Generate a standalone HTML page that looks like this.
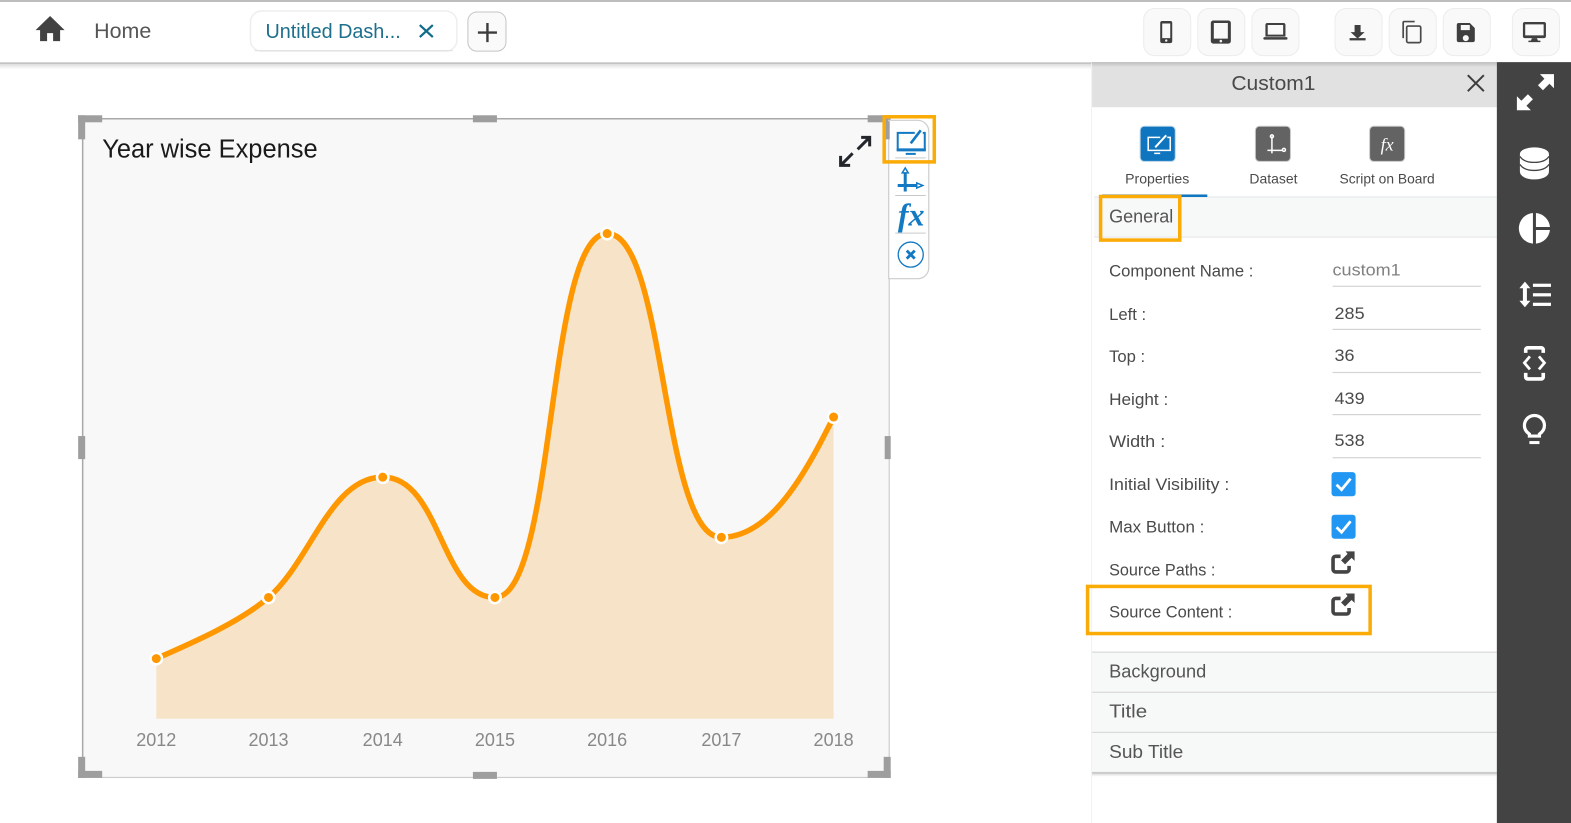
<!DOCTYPE html>
<html><head><meta charset="utf-8"><style>
html,body{margin:0;padding:0;background:#fff;width:1571px;height:823px;overflow:hidden}
svg{display:block;position:absolute;left:0;top:0}
text{font-family:"Liberation Sans",sans-serif}
</style></head><body>
<svg width="1571" height="823" viewBox="0 0 1568 821" preserveAspectRatio="none" xmlns="http://www.w3.org/2000/svg">
<defs>
<linearGradient id="sh" x1="0" y1="0" x2="0" y2="1"><stop offset="0" stop-color="#000" stop-opacity=".16"/><stop offset="1" stop-color="#000" stop-opacity="0"/></linearGradient>
</defs>
<!-- top bar -->
<rect x="0" y="0" width="1568" height="2" fill="#bdbdbd"/>
<rect x="0" y="62" width="1568" height="1.5" fill="#cfcfcf"/>
<rect x="0" y="63" width="1090" height="6" fill="url(#sh)"/>
<path d="M50 16 L64.5 30 L60 30 L60 41 L53 41 L53 33 L47 33 L47 41 L40 41 L40 30 L35.500 30 Z" fill="#424242"/>
<text x="94" y="38" font-size="21" textLength="57" lengthAdjust="spacingAndGlyphs" fill="#555">Home</text>
<rect x="250" y="11" width="206" height="40" rx="11" fill="#fff" stroke="#eeeeee" stroke-width="1.500"/>
<path d="M254 50.500 H452" fill="none" stroke="#e4e4e4" stroke-width="1.200"/>
<text x="265" y="38" font-size="20" textLength="135" lengthAdjust="spacingAndGlyphs" fill="#1d6f8c">Untitled Dash...</text>
<path d="M419 25 L432 37 M432 25 L419 37" stroke="#0f6b8a" stroke-width="2.200"/>
<rect x="467" y="12" width="38" height="39" rx="9" fill="#fafafa" stroke="#c4c4c4"/>
<path d="M477 32.500 H496 M486.500 23 V42" stroke="#3c3c3c" stroke-width="2.400"/>

<!-- device buttons -->
<g fill="#f9f9f9" stroke="#ececec">
<rect x="1141.500" y="8.500" width="47" height="47" rx="11"/>
<rect x="1195.500" y="8.500" width="47" height="47" rx="11"/>
<rect x="1249.500" y="8.500" width="47" height="47" rx="11"/>
<rect x="1332.500" y="8.500" width="47" height="47" rx="11"/>
<rect x="1386.500" y="8.500" width="47" height="47" rx="11"/>
<rect x="1440.500" y="8.500" width="47" height="47" rx="11"/>
<rect x="1509.500" y="8.500" width="47" height="47" rx="11"/>
</g>
<g fill="#3f3f3f">
<path fill-rule="evenodd" d="M1160 21h8a2 2 0 0 1 2 2v18a2 2 0 0 1-2 2h-8a2 2 0 0 1-2-2V23a2 2 0 0 1 2-2zm0 2.500V38h8V23.500z"/>
<path fill-rule="evenodd" d="M1211 20.500h15a2.500 2.500 0 0 1 2.500 2.500v18a2.500 2.500 0 0 1-2.500 2.500h-15a2.500 2.500 0 0 1-2.500-2.500V23a2.500 2.500 0 0 1 2.500-2.500zm.5 2.500v15.500h14V23z"/>
<path fill-rule="evenodd" d="M1265 23h16a2 2 0 0 1 2 2v11.500h-20V25a2 2 0 0 1 2-2zm.3 2v9.500h15.400V25z"/>
<rect x="1261" y="37" width="24" height="2.500" rx="1"/>
<path d="M1352 25h6v7h4l-7 6.500-7-6.500h4z"/>
<rect x="1347" y="38" width="16" height="2.300"/>
<path fill-rule="evenodd" d="M1456 23h11l5 5v12a2 2 0 0 1-2 2h-14a2 2 0 0 1-2-2V25a2 2 0 0 1 2-2zm2 2v5h9v-5zm5 10a3 3 0 1 0 .01 0z"/>
<path fill-rule="evenodd" d="M1522 22h19a2 2 0 0 1 2 2v12a2 2 0 0 1-2 2h-19a2 2 0 0 1-2-2V24a2 2 0 0 1 2-2zm.300 2.300v11h18.400v-11z"/>
<path d="M1529 38h5l1 2.500h2.500v1.500h-12v-1.500h2.500z"/>
</g>
<g fill="#f2f2f2"><circle cx="1164" cy="40.500" r="1.200"/><circle cx="1218.500" cy="41" r="1.300"/></g>
<g fill="none" stroke="#4a4a4a" stroke-width="1.700">
<path d="M1400.500 38V22.500a1 1 0 0 1 1-1H1412"/>
<rect x="1404" y="26" width="14" height="16.500" rx="1.500"/>
</g>

<!-- right panel -->
<rect x="1089" y="63" width="1" height="760" fill="#eef2f4"/>
<rect x="1090" y="62" width="404" height="45" fill="#e1e1e1"/>
<rect x="1090" y="62" width="404" height="5" fill="url(#sh)"/>
<text x="1229" y="90" font-size="20" textLength="84" lengthAdjust="spacingAndGlyphs" fill="#4a4a4a">Custom1</text>
<path d="M1465 75 L1481 91 M1481 75 L1465 91" stroke="#3d3d3d" stroke-width="2"/>

<!-- tabs -->
<rect x="1138" y="126" width="35" height="35" rx="4" fill="#0f75bf" stroke="#b8d3e6"/>
<rect x="1253" y="126" width="35" height="35" rx="4" fill="#636363" stroke="#c9c9c9"/>
<rect x="1367" y="126" width="35" height="35" rx="4" fill="#636363" stroke="#c9c9c9"/>
<g fill="none" stroke="#fff" stroke-width="1.500">
<path d="M1158 137h-12v13h22v-13h-3"/>
<path d="M1153 147 L1164 135" stroke-width="2"/>
<path d="M1152 153h6"/>
<path d="M1269.500 136V153 M1265 150h15"/>
<circle cx="1269.500" cy="136" r="1.500"/><circle cx="1281.500" cy="149.500" r="1.500"/>
</g>
<text x="1384.500" y="150" text-anchor="middle" font-style="italic" font-size="18" style="font-family:'Liberation Serif',serif" fill="#fff">fx</text>
<g fill="#4a4a4a">
<text x="1123" y="183" font-size="13.500" textLength="64" lengthAdjust="spacingAndGlyphs">Properties</text>
<text x="1247" y="183" font-size="13.500" textLength="48" lengthAdjust="spacingAndGlyphs">Dataset</text>
<text x="1337" y="183" font-size="13.500" textLength="95" lengthAdjust="spacingAndGlyphs">Script on Board</text>
</g>
<rect x="1092" y="197" width="402" height="39" fill="#f7f8f8"/>
<rect x="1092" y="196" width="402" height="1" fill="#dfe7ea"/>
<rect x="1092" y="236" width="402" height="1" fill="#e3e3e3"/>
<rect x="1100" y="194" width="105" height="2.500" fill="#0f75bf"/>
<text x="1107" y="222" font-size="18" textLength="64" lengthAdjust="spacingAndGlyphs" fill="#555">General</text>

<!-- form -->
<g font-size="16.500" fill="#4a4a4a">
<text x="1107" y="276" textLength="144" lengthAdjust="spacingAndGlyphs">Component Name :</text>
<text x="1107" y="319" textLength="37" lengthAdjust="spacingAndGlyphs">Left :</text>
<text x="1107" y="361" textLength="36" lengthAdjust="spacingAndGlyphs">Top :</text>
<text x="1107" y="404" textLength="59" lengthAdjust="spacingAndGlyphs">Height :</text>
<text x="1107" y="446" textLength="56" lengthAdjust="spacingAndGlyphs">Width :</text>
<text x="1107" y="489" textLength="120" lengthAdjust="spacingAndGlyphs">Initial Visibility :</text>
<text x="1107" y="531" textLength="95" lengthAdjust="spacingAndGlyphs">Max Button :</text>
<text x="1107" y="574" textLength="106" lengthAdjust="spacingAndGlyphs">Source Paths :</text>
<text x="1107" y="616" textLength="123" lengthAdjust="spacingAndGlyphs">Source Content :</text>
<text x="1330" y="275" textLength="68" lengthAdjust="spacingAndGlyphs" fill="#808080">custom1</text>
<text x="1332" y="318" textLength="30" lengthAdjust="spacingAndGlyphs">285</text>
<text x="1332" y="360" textLength="20" lengthAdjust="spacingAndGlyphs">36</text>
<text x="1332" y="403" textLength="30" lengthAdjust="spacingAndGlyphs">439</text>
<text x="1332" y="445" textLength="30" lengthAdjust="spacingAndGlyphs">538</text>
</g>
<g fill="#d4d4d4">
<rect x="1330" y="285" width="148" height="1.200"/>
<rect x="1330" y="328" width="148" height="1.200"/>
<rect x="1330" y="371" width="148" height="1.200"/>
<rect x="1330" y="413" width="148" height="1.200"/>
<rect x="1330" y="456" width="148" height="1.200"/>
</g>
<rect x="1329" y="471" width="24" height="24" rx="3" fill="#2196f3"/>
<rect x="1329" y="513.500" width="24" height="24" rx="3" fill="#2196f3"/>
<path d="M1334 483.500 L1339 488.500 L1348 477.500 M1334 526 L1339 531 L1348 520" fill="none" stroke="#fff" stroke-width="2.800"/>
<g>
<path d="M1338 555h-5a2.500 2.500 0 0 0-2.500 2.500v10.500a2.500 2.500 0 0 0 2.500 2.500h11a2.500 2.500 0 0 0 2.500-2.500v-3.500" fill="none" stroke="#444" stroke-width="3.600"/>
<path d="M1343 550h9v9.500l-3-3-6.500 6.500-4-4 6.500-6.500z" fill="#444"/>
</g>
<g transform="translate(0 42)">
<path d="M1338 555h-5a2.500 2.500 0 0 0-2.500 2.500v10.500a2.500 2.500 0 0 0 2.500 2.500h11a2.500 2.500 0 0 0 2.500-2.500v-3.500" fill="none" stroke="#444" stroke-width="3.600"/>
<path d="M1343 550h9v9.500l-3-3-6.500 6.500-4-4 6.500-6.500z" fill="#444"/>
</g>

<!-- accordions -->
<rect x="1090" y="650" width="404" height="121" fill="#f7f8f8"/>
<rect x="1090" y="650" width="404" height="1.200" fill="#d9d9d9"/>
<rect x="1090" y="690" width="404" height="1.200" fill="#d9d9d9"/>
<rect x="1090" y="730" width="404" height="1.200" fill="#d9d9d9"/>
<rect x="1090" y="770" width="404" height="1.500" fill="#cfcfcf"/>
<rect x="1090" y="771" width="404" height="4" fill="url(#sh)"/>
<g fill="#555">
<text x="1107" y="676" font-size="18" textLength="97" lengthAdjust="spacingAndGlyphs">Background</text>
<text x="1107" y="716" font-size="18" textLength="38" lengthAdjust="spacingAndGlyphs">Title</text>
<text x="1107" y="756" font-size="18" textLength="74" lengthAdjust="spacingAndGlyphs">Sub Title</text>
</g>

<!-- dark sidebar -->
<rect x="1494" y="62" width="74" height="761" fill="#434343"/>
<g fill="#fff">
<path d="M1537 74h14v14l-4.500-4.500-6.500 6.500-5-5 6.500-6.500z"/>
<path d="M1514 110v-14l4.500 4.500 6.500-6.500 5 5-6.500 6.500 4.500 4.500z"/>
<!-- database -->
<path d="M1517 153.500a14.500 6.500 0 0 1 29 0V171c0 5-6.500 8-14.500 8s-14.500-3-14.500-8z"/>
<!-- pie -->
<path d="M1530 212.500v30.500a15.300 15.300 0 0 1 0-30.500z"/>
<path d="M1533 212.500a15.300 15.300 0 0 1 14 14H1533z"/>
<path d="M1533 229.500h14A15.300 15.300 0 0 1 1533 243z"/>
<!-- sort list -->
<path d="M1522 281l5.500 6.500h-3.500v12.500h3.500l-5.500 6.500-5.500-6.500h3.500v-12.500h-3.500z"/>
<rect x="1530" y="283" width="18" height="3.200"/><rect x="1530" y="292.500" width="18" height="3.200"/><rect x="1530" y="302" width="18" height="3.200"/>
</g>
<path d="M1517 156c2.500 4 8 6 14.500 6s12-2 14.500-6M1517 164c2.500 4 8 6 14.500 6s12-2 14.500-6" fill="none" stroke="#434343" stroke-width="1.300"/>
<g fill="none" stroke="#fff" stroke-width="3.600">
<path d="M1522.800 352v-3a2 2 0 0 1 2-2h13.500a2 2 0 0 1 2 2v3"/>
<path d="M1522.800 372v4a2 2 0 0 0 2 2h13.500a2 2 0 0 0 2-2v-4"/>
<path d="M1527 355.500l-5.500 6.500 5.500 6.500M1536 355.500l5.500 6.500-5.500 6.500" stroke-width="2.800"/>
<path d="M1526.500 433c-3-2-5-5-5-8.500a10 10 0 0 1 20 0c0 3.500-2 6.500-5 8.500v2h-10z" stroke-width="3.200"/>
<path d="M1526.500 441.500h10" stroke-width="3"/>
</g>

<!-- chart card -->
<rect x="82" y="118" width="806" height="658" fill="#f8f8f8"/>
<path d="M82.500 776V118.500H887.500" fill="none" stroke="#a8a8a8" stroke-width="1.500"/>
<path d="M82 775.500H887.500V118" fill="none" stroke="#c6c6c6" stroke-width="1"/>
<rect x="78" y="115" width="24" height="7" fill="#9e9e9e"/>
<rect x="78" y="115" width="7" height="24" fill="#9e9e9e"/>
<rect x="472" y="115" width="24" height="7" fill="#9e9e9e"/>
<rect x="866" y="115" width="23" height="7" fill="#9e9e9e"/>
<rect x="78" y="435" width="7" height="23" fill="#9e9e9e"/>
<rect x="883" y="435" width="6" height="23" fill="#9e9e9e"/>
<rect x="78" y="755" width="7" height="21" fill="#9e9e9e"/>
<rect x="78" y="769" width="24" height="7" fill="#9e9e9e"/>
<rect x="472" y="770" width="24" height="7" fill="#9e9e9e"/>
<rect x="866" y="769" width="23" height="7" fill="#9e9e9e"/>
<rect x="882" y="755" width="7" height="21" fill="#9e9e9e"/>

<text x="102" y="157" font-size="26" textLength="215" lengthAdjust="spacingAndGlyphs" fill="#1a1a1a">Year wise Expense</text>
<path d="M868 137 L856 149 M859.500 137 H868 V146 M839 165 L851 153 M839 155.500 V165 H848.500" fill="none" stroke="#23262b" stroke-width="3"/>

<path d="M156 657 C195 640 240 620 268 596 C310 560 330 476 382 476 C440 476 440 596 494 596 C555 596 545 233 606 233 C665 233 660 536 720 536 C770 536 805 470 832 416 V717 H156 Z" fill="#f7e4c8"/>
<path d="M156 657 C195 640 240 620 268 596 C310 560 330 476 382 476 C440 476 440 596 494 596 C555 596 545 233 606 233 C665 233 660 536 720 536 C770 536 805 470 832 416" fill="none" stroke="#ff9800" stroke-width="5.500"/>
<g fill="#ff9800" stroke="#fff" stroke-width="2.500">
<circle cx="156" cy="657" r="5.750"/><circle cx="268" cy="596" r="5.750"/><circle cx="382" cy="476" r="5.750"/><circle cx="494" cy="596" r="5.750"/><circle cx="606" cy="233" r="5.750"/><circle cx="720" cy="536" r="5.750"/><circle cx="832" cy="416" r="5.750"/>
</g>
<g font-size="18" text-anchor="middle" fill="#888">
<text x="156" y="744">2012</text><text x="268" y="744">2013</text><text x="382" y="744">2014</text><text x="494" y="744">2015</text><text x="606" y="744">2016</text><text x="720" y="744">2017</text><text x="832" y="744">2018</text>
</g>

<!-- floating toolbar -->
<path d="M887 120H916a11 11 0 0 1 11 11V267a11 11 0 0 1-11 11H887Z" fill="#fff" stroke="#cdcdcd" stroke-width="1.200"/>
<rect x="883" y="121" width="5" height="18" fill="#9e9e9e"/>
<g fill="none" stroke="#1279c2">
<path d="M913 132.500h-17v17h27v-17h-2" stroke-width="2"/>
<path d="M909 143L919 130" stroke-width="2.600"/>
<path d="M895 148h29v3h-29z" fill="#1279c2" stroke="none"/>
<path d="M904 153.500h10" stroke-width="2"/>
<path d="M903.500 172V191 M896 185h19" stroke-width="3"/>
<path d="M900.500 172.500L903.500 167.500L906.500 172.500Z" fill="#fff" stroke-width="1.500"/>
<path d="M915 182.500L921 185L915 187.500Z" fill="#fff" stroke-width="1.500"/>
<circle cx="909" cy="254" r="12.500" stroke-width="1.300"/>
<path d="M905 250 L913 258 M913 250 L905 258" stroke-width="2.800"/>
</g>
<path d="M893.500 157.500H924M893.500 195H924M893.500 232.500H924" stroke="#c9c9c9" stroke-width="1"/>
<text x="909.500" y="225" text-anchor="middle" font-size="32" font-style="italic" font-weight="bold" fill="#1279c2" style="font-family:'Liberation Serif',serif">fx</text>

<!-- highlight boxes -->
<g fill="none" stroke="#fbab06" stroke-width="3.500">
<rect x="882.500" y="116.500" width="50" height="45"/>
<rect x="1098.500" y="196" width="79" height="43.500"/>
<rect x="1085.500" y="585" width="282" height="47"/>
</g>
</svg>
</body></html>
